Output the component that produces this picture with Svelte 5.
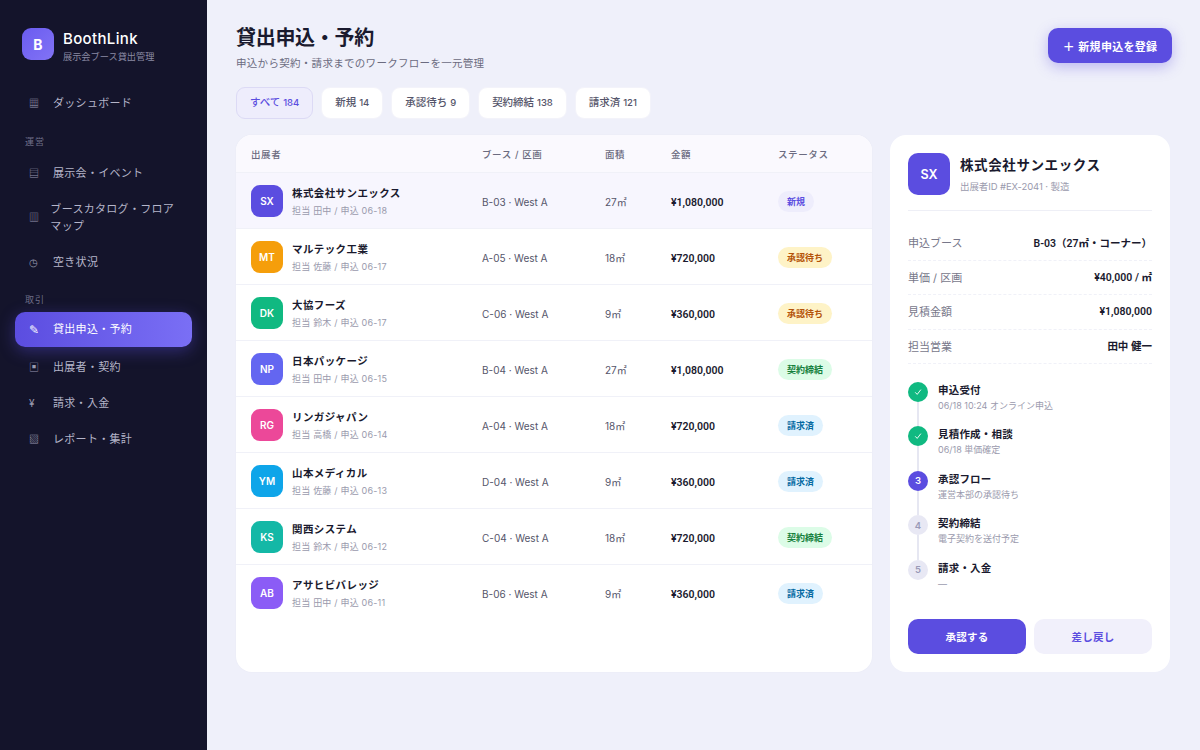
<script>
  const nav1 = [{ icon: '▦', label: 'ダッシュボード' }];
  const nav2 = [
    { icon: '▤', label: '展示会・イベント' },
    { icon: '▥', label: 'ブースカタログ・フロアマップ' },
    { icon: '◷', label: '空き状況' }
  ];
  const nav3 = [
    { icon: '✎', label: '貸出申込・予約', active: true },
    { icon: '▣', label: '出展者・契約' },
    { icon: '¥', label: '請求・入金' },
    { icon: '▧', label: 'レポート・集計' }
  ];
  const tabs = [
    ['すべて', 184], ['新規', 14], ['承認待ち', 9], ['契約締結', 138], ['請求済', 121]
  ];
  const rows = [
    { code: 'SX', color: '#5b4de0', name: '株式会社サンエックス', sub: '担当 田中 / 申込 06-18', booth: 'B-03 · West A', area: '27㎡', price: '¥1,080,000', status: '新規', kind: 'new', selected: true },
    { code: 'MT', color: '#f59e0b', name: 'マルテック工業', sub: '担当 佐藤 / 申込 06-17', booth: 'A-05 · West A', area: '18㎡', price: '¥720,000', status: '承認待ち', kind: 'wait' },
    { code: 'DK', color: '#10b981', name: '大協フーズ', sub: '担当 鈴木 / 申込 06-17', booth: 'C-06 · West A', area: '9㎡', price: '¥360,000', status: '承認待ち', kind: 'wait' },
    { code: 'NP', color: '#6366f1', name: '日本パッケージ', sub: '担当 田中 / 申込 06-15', booth: 'B-04 · West A', area: '27㎡', price: '¥1,080,000', status: '契約締結', kind: 'done' },
    { code: 'RG', color: '#ec4899', name: 'リンガジャパン', sub: '担当 高橋 / 申込 06-14', booth: 'A-04 · West A', area: '18㎡', price: '¥720,000', status: '請求済', kind: 'paid' },
    { code: 'YM', color: '#0ea5e9', name: '山本メディカル', sub: '担当 佐藤 / 申込 06-13', booth: 'D-04 · West A', area: '9㎡', price: '¥360,000', status: '請求済', kind: 'paid' },
    { code: 'KS', color: '#14b8a6', name: '関西システム', sub: '担当 鈴木 / 申込 06-12', booth: 'C-04 · West A', area: '18㎡', price: '¥720,000', status: '契約締結', kind: 'done' },
    { code: 'AB', color: '#8b5cf6', name: 'アサヒビバレッジ', sub: '担当 田中 / 申込 06-11', booth: 'B-06 · West A', area: '9㎡', price: '¥360,000', status: '請求済', kind: 'paid' }
  ];
  const facts = [
    ['申込ブース', 'B-03（27㎡・コーナー）'],
    ['単価 / 区画', '¥40,000 / ㎡'],
    ['見積金額', '¥1,080,000'],
    ['担当営業', '田中 健一']
  ];
  const steps = [
    { mark: '', state: 'done', title: '申込受付', note: '06/18 10:24 オンライン申込' },
    { mark: '', state: 'done', title: '見積作成・相談', note: '06/18 単価確定' },
    { mark: '3', state: 'now', title: '承認フロー', note: '運営本部の承認待ち' },
    { mark: '4', state: 'todo', title: '契約締結', note: '電子契約を送付予定' },
    { mark: '5', state: 'todo', title: '請求・入金', note: '—' }
  ];
</script>

{#snippet navItem(item)}
  <div class="nav-item" class:active={item.active}>
    <span class="nav-icon">{item.icon}</span>
    <span>{item.label}</span>
  </div>
{/snippet}

<div class="app">
  <aside class="sidebar">
    <div class="brand">
      <div class="logo">B</div>
      <div class="brand-text">
        <div class="brand-name">BoothLink</div>
        <div class="brand-sub">展示会ブース貸出管理</div>
      </div>
    </div>
    {#each nav1 as item}{@render navItem(item)}{/each}
    <div class="nav-group">運営</div>
    {#each nav2 as item}{@render navItem(item)}{/each}
    <div class="nav-group deals">取引</div>
    {#each nav3 as item}{@render navItem(item)}{/each}
  </aside>

  <main class="main">
    <header class="top">
      <div>
        <h1>貸出申込・予約</h1>
        <p>申込から契約・請求までのワークフローを一元管理</p>
      </div>
      <button class="add"><span class="plus">+</span>新規申込を登録</button>
    </header>

    <div class="tabs">
      {#each tabs as [label, count], i}
        <div class="tab" class:on={i === 0}>{label} <small>{count}</small></div>
      {/each}
    </div>

    <div class="content">
      <section class="table">
        <div class="row head">
          <div>出展者</div>
          <div>ブース / 区画</div>
          <div>面積</div>
          <div>金額</div>
          <div>ステータス</div>
        </div>
        {#each rows as r}
          <div class="row item" class:selected={r.selected}>
            <div class="who">
              <div class="avatar" style="background:{r.color}">{r.code}</div>
              <div class="who-text">
                <div class="name">{r.name}</div>
                <div class="sub">{r.sub}</div>
              </div>
            </div>
            <div class="cell">{r.booth}</div>
            <div class="cell">{r.area}</div>
            <div class="price">{r.price}</div>
            <div><span class="badge {r.kind}">{r.status}</span></div>
          </div>
        {/each}
      </section>

      <section class="detail">
        <div class="detail-head">
          <div class="detail-avatar">SX</div>
          <div>
            <div class="detail-name">株式会社サンエックス</div>
            <div class="detail-sub">出展者ID #EX-2041 · 製造</div>
          </div>
        </div>

        <div class="facts">
          {#each facts as [k, v]}
            <div class="fact"><span class="key">{k}</span><span class="val">{v}</span></div>
          {/each}
        </div>

        <div class="steps">
          {#each steps as s}
            <div class="step">
              <div class="dot {s.state}">
                {#if s.state === 'done'}
                  <svg width="8" height="8" viewBox="0 0 8 8" fill="none" stroke="currentColor" stroke-width="0.9"><path d="M1.2 4.3 3.2 6.4 6.9 1.6" /></svg>
                {:else}
                  {s.mark}
                {/if}
              </div>
              <div class="step-text">
                <div class="step-title">{s.title}</div>
                <div class="step-note">{s.note}</div>
              </div>
            </div>
          {/each}
        </div>

        <div class="actions">
          <button class="approve">承認する</button>
          <button class="back">差し戻し</button>
        </div>
      </section>
    </div>
  </main>
</div>

<style>
  :global(body) {
    margin: 0;
    background: #eff0fa;
    font-family: Inter, "Noto Sans CJK JP", sans-serif;
  }

  .app {
    display: flex;
    width: 1200px;
    height: 750px;
    overflow: hidden;
    color: #1a1a2e;
  }

  .sidebar {
    width: 207px;
    flex: none;
    box-sizing: border-box;
    background: #14142b;
    padding: 28px 15px 0;
    color: #b5b5c9;
  }

  .brand {
    display: flex;
    align-items: flex-start;
    gap: 9px;
    padding: 0 7px;
    margin-bottom: 22px;
  }

  .brand-text {
    padding-top: 1px;
  }

  .logo {
    width: 32px;
    height: 32px;
    border-radius: 9px;
    background: linear-gradient(135deg, #6a5cf0, #8273f5);
    color: #fff;
    font-weight: 700;
    font-size: 14px;
    display: flex;
    align-items: center;
    justify-content: center;
  }

  .brand-name {
    color: #fff;
    font-size: 15px;
    font-weight: 500;
    line-height: 20px;
    letter-spacing: 0.35px;
  }

  .brand-sub {
    font-size: 9.2px;
    color: #8a8aa3;
    line-height: 14px;
    margin-top: 1px;
  }

  .nav-item {
    display: flex;
    align-items: center;
    gap: 10px;
    padding: 9px 14px;
    margin-bottom: 1.3px;
    font-size: 11px;
    line-height: 17px;
    letter-spacing: 0.3px;
    border-radius: 10px;
  }

  .nav-item.active {
    background: linear-gradient(90deg, #5b4de0, #7a6ff5);
    color: #fff;
    box-shadow: 0 4px 16px rgba(91, 77, 224, 0.4);
    margin-bottom: 3.3px;
  }

  .nav-icon {
    width: 14px;
    font-size: 10px;
    text-align: left;
    color: #9a9ab0;
  }

  .active .nav-icon {
    color: #fff;
    font-size: 12px;
  }

  .nav-group {
    font-size: 9px;
    color: #6e6e88;
    letter-spacing: 1px;
    padding: 0 10px;
    margin: 14px 0 6.5px;
    line-height: 14px;
  }

  .nav-group.deals {
    margin: 13px 0 4.5px;
  }

  .main {
    flex: 1;
    min-width: 0;
    padding: 28px 28px 0 29px;
  }

  .top {
    display: flex;
    justify-content: space-between;
    align-items: flex-start;
    margin-bottom: 16px;
  }

  h1 {
    margin: 0;
    font-size: 20px;
    line-height: 20px;
    font-weight: 700;
    letter-spacing: -0.3px;
    color: #1a1a2e;
  }

  .top p {
    margin: 8px 0 0;
    font-size: 10.5px;
    line-height: 15px;
    letter-spacing: 0.3px;
    color: #6b6b80;
  }

  .add {
    width: 124px;
    height: 35px;
    border: 0;
    border-radius: 10px;
    background: #5b4de0;
    color: #fff;
    font: 600 11px Inter, "Noto Sans CJK JP", sans-serif;
    letter-spacing: 0.3px;
    box-shadow: 0 4px 14px rgba(91, 77, 224, 0.35);
    padding: 0;
  }

  .plus {
    font-size: 19px;
    font-weight: 300;
    line-height: 0;
    margin-right: 3px;
    vertical-align: -1px;
  }

  .tabs {
    display: flex;
    gap: 8px;
    align-items: center;
    margin-bottom: 16px;
  }

  .tab {
    height: 30px;
    line-height: 30px;
    padding: 0 13px;
    background: #fff;
    border-radius: 9px;
    font-size: 10.5px;
    font-weight: 500;
    color: #55556a;
    border: 1px solid #f3f3fa;
  }

  .tab small {
    font-size: 9.5px;
  }

  .tab.on {
    background: #eeedfc;
    color: #5b4de0;
    border-color: #dcdaf5;
  }

  .content {
    display: flex;
    gap: 18px;
    align-items: stretch;
  }

  .table {
    width: 636px;
    height: 537px;
    flex: none;
    background: #fff;
    border-radius: 16px;
    overflow: hidden;
    box-shadow: 0 0 0 1px #edeef8;
  }

  .row {
    display: grid;
    grid-template-columns: 231px 123px 66px 107px 1fr;
    align-items: center;
    padding: 0 15px;
    border-bottom: 1px solid #f0f1f8;
  }

  .row:last-child {
    border-bottom: 0;
  }

  .head {
    height: 37px;
    background: #faf9fe;
    font-size: 9.5px;
    font-weight: 500;
    letter-spacing: 0.6px;
    color: #6b6b80;
  }

  .item {
    height: 55px;
  }

  .item.selected {
    background: #f7f6fe;
  }

  .who {
    display: flex;
    align-items: center;
    gap: 9px;
  }

  .who-text {
    padding-top: 2px;
  }

  .avatar {
    width: 32px;
    height: 32px;
    border-radius: 9px;
    color: #fff;
    font-size: 10px;
    font-weight: 600;
    display: flex;
    align-items: center;
    justify-content: center;
  }

  .name {
    font-size: 10.5px;
    font-weight: 600;
    line-height: 16px;
    letter-spacing: 0.4px;
  }

  .sub {
    font-size: 9px;
    line-height: 14px;
    letter-spacing: 0.2px;
    color: #9a9aad;
    margin-top: 2px;
  }

  .cell {
    font-size: 10px;
    color: #55556a;
    padding-top: 2px;
  }

  .price {
    font-family: Roboto, "Noto Sans CJK JP", sans-serif;
    font-size: 10.5px;
    font-weight: 600;
    padding-top: 3px;
  }

  .badge {
    display: inline-block;
    font-size: 9px;
    font-weight: 600;
    line-height: 21px;
    padding: 0 9px;
    border-radius: 11px;
  }

  .badge.new {
    background: #eeedfc;
    color: #5b4de0;
  }

  .badge.wait {
    background: #fef3c7;
    color: #b45309;
  }

  .badge.done {
    background: #dcfce7;
    color: #15803d;
  }

  .badge.paid {
    background: #e0f2fe;
    color: #0369a1;
  }

  .detail {
    width: 280px;
    height: 537px;
    flex: none;
    box-sizing: border-box;
    background: #fff;
    border-radius: 16px;
    padding: 18px 18px 18px;
    display: flex;
    flex-direction: column;
  }

  .detail-head {
    display: flex;
    gap: 10px;
    padding-bottom: 15px;
    border-bottom: 1px solid #eeeff6;
    margin-bottom: 15px;
  }

  .detail-avatar {
    width: 42px;
    height: 42px;
    border-radius: 10px;
    background: #5b4de0;
    color: #fff;
    font-size: 12.5px;
    font-weight: 600;
    display: flex;
    align-items: center;
    justify-content: center;
  }

  .detail-name {
    font-size: 13.5px;
    font-weight: 700;
    letter-spacing: 0.6px;
    line-height: 24px;
    margin-bottom: 2px;
  }

  .detail-sub {
    font-size: 9.5px;
    color: #9a9aad;
    line-height: 16px;
    letter-spacing: -0.1px;
  }

  .fact {
    display: flex;
    justify-content: space-between;
    align-items: center;
    height: 32.5px;
    padding-bottom: 1px;
    border-bottom: 1px dashed #f0f1f8;
    font-size: 11px;
  }

  .key {
    color: #77778a;
  }

  .val {
    font-family: Roboto, "Noto Sans CJK JP", sans-serif;
    font-size: 10.5px;
    font-weight: 600;
  }

  .steps {
    margin-top: 17.5px;
  }

  .step {
    position: relative;
    display: flex;
    gap: 10px;
    height: 44.5px;
  }

  .step:not(:last-child)::before {
    content: '';
    position: absolute;
    left: 9px;
    top: 20px;
    bottom: 0;
    width: 2px;
    background: #e6e7f2;
  }

  .dot {
    width: 20px;
    height: 20px;
    border-radius: 50%;
    flex: none;
    font-size: 9.5px;
    font-weight: 600;
    display: flex;
    align-items: center;
    justify-content: center;
    position: relative;
  }

  .dot.done {
    background: #10b981;
    color: #fff;
  }

  .dot.now {
    background: #5b4de0;
    color: #fff;
  }

  .dot.todo {
    background: #e8e8f4;
    color: #9a9ab8;
  }

  .step-text {
    padding-top: 1px;
  }

  .step-title {
    font-size: 10.5px;
    font-weight: 600;
    line-height: 15px;
    letter-spacing: 0.2px;
  }

  .step-note {
    font-size: 9px;
    color: #9a9aad;
    line-height: 14px;
    margin-top: 1px;
  }

  .actions {
    display: flex;
    gap: 8px;
    margin-top: auto;
  }

  .actions button {
    flex: 1;
    height: 35px;
    border: 0;
    border-radius: 10px;
    font: 600 10.5px Inter, "Noto Sans CJK JP", sans-serif;
    letter-spacing: 0.3px;
  }

  .approve {
    background: #5b4de0;
    color: #fff;
  }

  .back {
    background: #f1f0fb;
    color: #5b4de0;
  }
</style>
